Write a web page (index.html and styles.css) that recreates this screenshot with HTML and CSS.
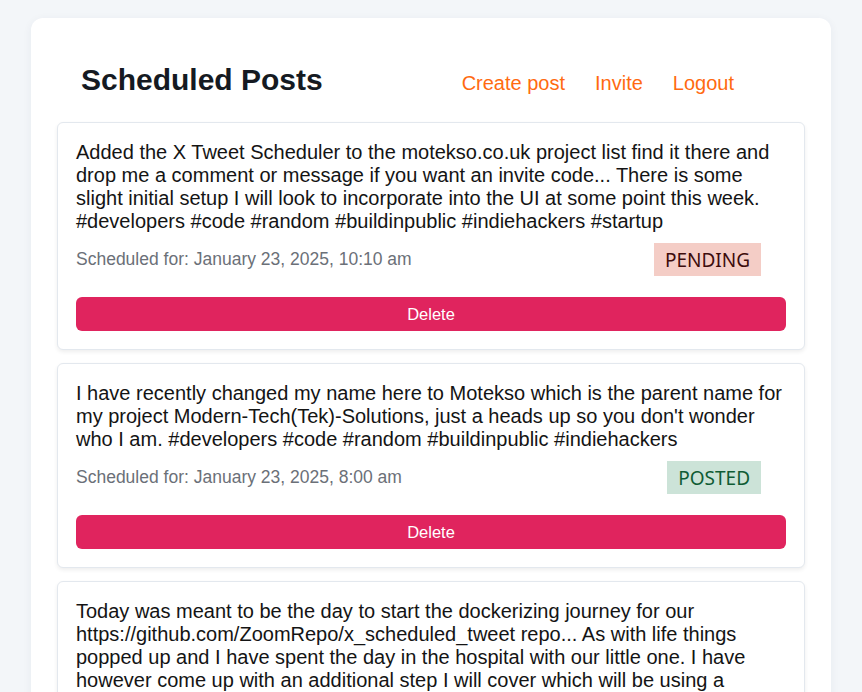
FILE: index.html
```html
<!DOCTYPE html>
<html lang="en">
<head>
<meta charset="utf-8">
<title>Scheduled Posts</title>
<link rel="stylesheet" href="styles.css">
</head>
<body>
<main class="container">
  <header class="header">
    <h1 class="title">Scheduled Posts</h1>
    <nav class="nav">
      <a class="nav-link" href="#">Create post</a>
      <a class="nav-link" href="#">Invite</a>
      <a class="nav-link" href="#">Logout</a>
    </nav>
  </header>
  <section class="posts">
    <article class="card">
      <p class="post-text">Added the X Tweet Scheduler to the motekso.co.uk project list find it there and drop me a comment or message if you want an invite code... There is some slight initial setup I will look to incorporate into the UI at some point this week. #developers #code #random #buildinpublic #indiehackers #startup</p>
      <div class="meta">
        <span class="scheduled">Scheduled for: January 23, 2025, 10:10 am</span>
        <span class="badge badge-pending">PENDING</span>
      </div>
      <button class="delete-btn" type="button">Delete</button>
    </article>
    <article class="card">
      <p class="post-text">I have recently changed my name here to Motekso which is the parent name for my project Modern-Tech(Tek)-Solutions, just a heads up so you don't wonder who I am. #developers #code #random #buildinpublic #indiehackers</p>
      <div class="meta">
        <span class="scheduled">Scheduled for: January 23, 2025, 8:00 am</span>
        <span class="badge badge-posted">POSTED</span>
      </div>
      <button class="delete-btn" type="button">Delete</button>
    </article>
    <article class="card">
      <p class="post-text">Today was meant to be the day to start the dockerizing journey for our https://github.com/ZoomRepo/x_scheduled_tweet repo... As with life things popped up and I have spent the day in the hospital with our little one. I have however come up with an additional step I will cover which will be using a reverse proxy so the app can be reached securely. #developers #code #random #buildinpublic</p>
      <div class="meta">
        <span class="scheduled">Scheduled for: January 22, 2025, 9:30 pm</span>
        <span class="badge badge-posted">POSTED</span>
      </div>
      <button class="delete-btn" type="button">Delete</button>
    </article>
  </section>
</main>
</body>
</html>
```
FILE: styles.css
```css
* {
  box-sizing: border-box;
}

html, body {
  margin: 0;
  padding: 0;
}

body {
  background: #f3f6f9;
  font-family: "Liberation Sans", Arial, sans-serif;
  color: #1a1a1a;
  padding-top: 18px;
}

.container {
  max-width: 800px;
  margin: 0 auto;
  background: #ffffff;
  border-radius: 12px;
  padding: 26px 26px 26px;
  box-shadow: 0 2px 10px rgba(30, 50, 80, 0.06);
}

.header {
  display: flex;
  justify-content: space-between;
  align-items: baseline;
  padding: 19px 71px 0 24px;
  margin-bottom: 25px;
}

.title {
  margin: 0;
  font-size: 30px;
  line-height: 34px;
  font-weight: 700;
  color: #151a22;
}

.nav {
  display: flex;
  gap: 30px;
}

.nav-link {
  font-size: 20px;
  line-height: 23px;
  color: #ff6a10;
  text-decoration: none;
}

.posts {
  display: flex;
  flex-direction: column;
  gap: 13px;
}

.card {
  border: 1px solid #e3e8ee;
  border-radius: 6px;
  background: #ffffff;
  padding: 18px 18px 18px;
  box-shadow: 0 2px 4px rgba(0, 0, 0, 0.07);
}

.post-text {
  margin: 0;
  font-size: 20px;
  line-height: 23px;
  color: #141414;
}

.meta {
  display: flex;
  justify-content: space-between;
  align-items: center;
  margin-top: 10px;
  padding-right: 25px;
}

.scheduled {
  font-size: 17.5px;
  color: #6b7078;
}

.badge {
  font-family: "Noto Sans", "Open Sans", sans-serif;
  font-size: 19px;
  line-height: 26px;
  padding: 3.5px 11px;
}

.badge-pending {
  background: #f4cdc6;
  color: #3d0c0c;
}

.badge-posted {
  background: #cce3d8;
  color: #0f5c34;
}

.delete-btn {
  display: block;
  width: 100%;
  margin-top: 21px;
  height: 34px;
  border: none;
  border-radius: 6px;
  background: #e0245e;
  color: #ffffff;
  font-family: "Liberation Sans", Arial, sans-serif;
  font-size: 16.5px;
  cursor: pointer;
}
```
